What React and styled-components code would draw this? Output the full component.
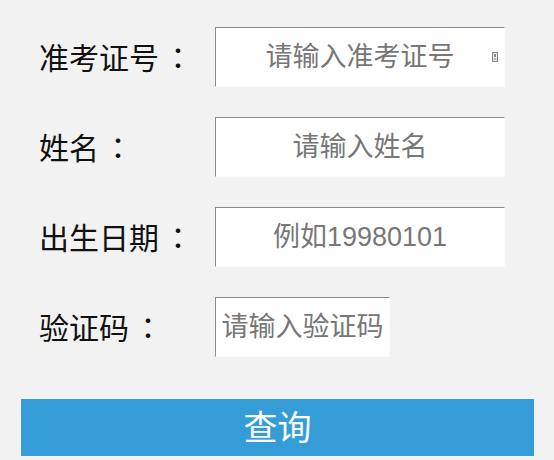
import React from "react";
import styled, { createGlobalStyle } from "styled-components";

const GlobalStyle = createGlobalStyle`
  html, body {
    margin: 0;
    padding: 0;
    background: #f2f2f2;
  }
  body {
    font-family: "Liberation Sans", "Noto Sans CJK SC", sans-serif;
  }
`;

const Page = styled.div`
  width: 554px;
  height: 460px;
  overflow: hidden;
  background: #f2f2f2;
  padding-top: 27px;
  box-sizing: border-box;
`;

const Form = styled.form`
  display: flex;
  flex-direction: column;
  margin: 0;
`;

const Fields = styled.div`
  display: flex;
  flex-direction: column;
  gap: 30px;
  padding-left: 39px;
`;

const Row = styled.div`
  display: flex;
  align-items: center;
  height: 60px;
`;

const Label = styled.label`
  width: 176px;
  flex: none;
  font-family: "Liberation Sans", "Noto Sans CJK SC", sans-serif;
  font-size: 30px;
  color: #111;
  line-height: 1;
  white-space: nowrap;
`;

const Colon = styled.span`
  font-family: "Noto Sans CJK JP", sans-serif;
  margin-left: 4px;
`;

const InputWrap = styled.div`
  position: relative;
  width: ${(p) => p.$w}px;
  height: 60px;
  flex: none;
`;

const Field = styled.input`
  box-sizing: border-box;
  width: 100%;
  height: 100%;
  margin: 0;
  background: #fff;
  border: 1px solid #fafafa;
  border-top-color: #8c8c8c;
  border-left-color: #8c8c8c;
  padding: 0;
  text-align: center;
  font-family: "Liberation Sans", "Noto Sans CJK SC", sans-serif;
  font-size: 27px;
  color: #333;
  outline: none;

  &::placeholder {
    color: #777;
    opacity: 1;
  }
`;

const KeyIcon = styled.svg`
  position: absolute;
  right: 7px;
  top: 25px;
`;

const Submit = styled.button`
  margin: 42px 0 0 21px;
  width: 513px;
  height: 57px;
  border: none;
  background: #349dd8;
  color: #fff;
  font-family: "Liberation Sans", "Noto Sans CJK SC", sans-serif;
  font-size: 34px;
  padding: 0;
  cursor: pointer;
  line-height: 1;
`;

const fields = [
  { label: "准考证号", placeholder: "请输入准考证号", w: 290, icon: true },
  { label: "姓名", placeholder: "请输入姓名", w: 290 },
  { label: "出生日期", placeholder: "例如19980101", w: 290 },
  { label: "验证码", placeholder: "请输入验证码", w: 175 },
];

export default function App() {
  return (
    <>
      <GlobalStyle />
      <Page>
        <Form onSubmit={(e) => e.preventDefault()}>
          <Fields>
            {fields.map((f) => (
              <Row key={f.label}>
                <Label>
                  {f.label}
                  <Colon>：</Colon>
                </Label>
                <InputWrap $w={f.w}>
                  <Field placeholder={f.placeholder} />
                  {f.icon && (
                    <KeyIcon width="6" height="10" viewBox="0 0 6 10">
                      <rect x="0.5" y="0.5" width="5" height="9" fill="#e8e8e8" stroke="#8a8a8a" />
                      <rect x="2" y="2" width="2" height="3" fill="#8a8a8a" />
                      <rect x="1.5" y="6.5" width="3" height="1" fill="#8a8a8a" />
                    </KeyIcon>
                  )}
                </InputWrap>
              </Row>
            ))}
          </Fields>
          <Submit type="submit">查询</Submit>
        </Form>
      </Page>
    </>
  );
}
